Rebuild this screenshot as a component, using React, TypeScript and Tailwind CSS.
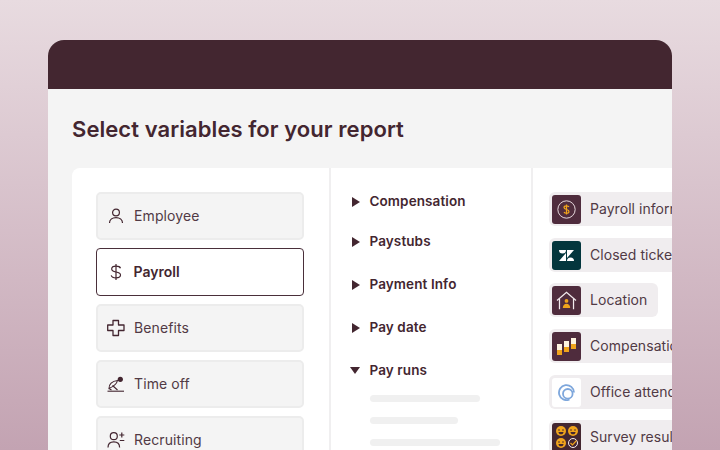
import React from "react";

const font = { fontFamily: "Inter, sans-serif" };

function PersonIcon() {
  return (
    <svg width="18" height="18" viewBox="0 0 18 18" fill="none" stroke="#432630" strokeWidth="1.2">
      <circle cx="9" cy="5.5" r="3.4" />
      <path d="M2.500 16c0-3.400 2.900-5.300 6.500-5.300s6.500 1.900 6.500 5.300" />
    </svg>
  );
}

function DollarIcon() {
  return (
    <svg width="18" height="18" viewBox="0 0 18 18" fill="none" stroke="#432630" strokeWidth="1.2">
      <path d="M9 1v16" />
      <path d="M13.500 5.200C13 3.800 11.500 3.200 9 3.200c-2.800 0-4.300 1.100-4.300 2.800 0 1.800 1.500 2.500 4.300 3 2.900.5 4.500 1.200 4.500 3 0 1.800-1.700 2.800-4.500 2.800-2.600 0-4.300-.8-4.800-2.500" />
    </svg>
  );
}

function PlusIcon() {
  return (
    <svg width="18" height="18" viewBox="0 0 18 18" fill="none" stroke="#432630" strokeWidth="1.300">
      <path d="M6 1.500h5.500v4.500h5.500v5.500h-5.500V16.500H6V11.500H.7V6H6z" strokeLinejoin="round" />
    </svg>
  );
}

function TimeOffIcon() {
  return (
    <svg width="18" height="18" viewBox="0 0 18 18" fill="none" stroke="#432630" strokeWidth="1.100">
      <circle cx="13.300" cy="4.300" r="2.600" fill="#432630" stroke="none" />
      <path d="M.5 16.200h16.500" />
      <path d="M2 13.500C1.800 9.500 5 6 10.500 5.500c-.6 2.800-3.500 5.800-8.500 8z" />
      <path d="M5.500 10.500l5 4.500" />
      <path d="M2 13.500l2.500 1.500" />
    </svg>
  );
}

function RecruitIcon() {
  return (
    <svg width="18" height="18" viewBox="0 0 18 18" fill="none" stroke="#432630" strokeWidth="1.200">
      <circle cx="6.800" cy="5.200" r="3.500" />
      <path d="M1 16.500c0-3.700 2.500-5.700 5.800-5.700s5.800 2 5.800 5.700" />
      <path d="M14.800 1.500v5M12.300 4h5M12.800 9.500h4.500" />
    </svg>
  );
}

function Tile({ bg, children }: { bg: string; children: React.ReactNode }) {
  return (
    <div className={`w-[29px] h-[29px] rounded-[3px] shrink-0 flex items-center justify-center ${bg}`}>
      {children}
    </div>
  );
}

function CoinLogo() {
  return (
    <svg width="19" height="19" viewBox="0 0 23 23" fill="none">
      <circle cx="11.500" cy="11.500" r="10.500" stroke="#e9dbe0" strokeWidth="1.200" />
      <path d="M14.500 8.500c-.5-1-1.500-1.500-3-1.500-1.800 0-3 .8-3 2.200s1.200 1.900 3 2.300c1.800.4 3 .9 3 2.300S13.300 16 11.500 16c-1.500 0-2.600-.5-3-1.500M11.500 5.500v12" stroke="#f0a41c" strokeWidth="1.500" />
    </svg>
  );
}

function ZendeskLogo() {
  return (
    <svg width="15" height="11" viewBox="0 0 15 11" fill="#ffffff">
      <path d="M0 0a3.500 3.500 0 0 0 7 0z" />
      <path d="M7 3v8H0z" />
      <path d="M8 0v8l7-8z" />
      <path d="M8 11a3.500 3.500 0 0 1 7 0z" />
    </svg>
  );
}

function HouseLogo() {
  return (
    <svg width="21" height="19" viewBox="0 0 25 23" fill="none">
      <path d="M1 11.500 12.500 1.500 24 11.500" stroke="#f3ebee" strokeWidth="1.500" />
      <path d="M4 9.500V22M21 9.500V22" stroke="#f3ebee" strokeWidth="1.500" />
      <circle cx="12.500" cy="12" r="2.300" fill="#f0a41c" />
      <path d="M8 20.500c0-3 1.800-5 4.500-5s4.500 2 4.500 5z" fill="#f0a41c" />
    </svg>
  );
}

function BarsLogo() {
  return (
    <svg width="19" height="17" viewBox="0 0 19 17">
      <rect x="0" y="6" width="5" height="11" fill="#f0a41c" />
      <rect x="0" y="6" width="5" height="6" fill="#fdf3e0" />
      <rect x="7" y="3" width="5" height="11" fill="#f0a41c" />
      <rect x="7" y="3" width="5" height="6" fill="#fdf3e0" />
      <rect x="14" y="0" width="5" height="11" fill="#f0a41c" />
      <rect x="14" y="0" width="5" height="6" fill="#fdf3e0" />
    </svg>
  );
}

function RingLogo() {
  return (
    <svg width="17" height="17" viewBox="0 0 17 17" fill="none" stroke="#7ea7dc" strokeWidth="1.800">
      <path d="M11.500 15.500A7.500 7.500 0 1 1 16 8.500" />
      <circle cx="9.800" cy="9.800" r="4.800" />
    </svg>
  );
}

function Face({ cx, cy }: { cx: number; cy: number }) {
  return (
    <g>
      <circle cx={cx} cy={cy} r="5" fill="#f0a41c" />
      <path d={`M${cx - 3} ${cy - 1}h2M${cx + 1} ${cy - 1}h2`} stroke="#432630" strokeWidth="0.900" />
      <path d={`M${cx - 2.5} ${cy + 1}h5c0 1.500-1 2.300-2.500 2.300s-2.500-.8-2.500-2.300z`} fill="#432630" />
    </g>
  );
}

function FacesLogo() {
  return (
    <svg width="24" height="24" viewBox="0 0 24 24">
      <Face cx={6} cy={6} />
      <Face cx={18} cy={6} />
      <Face cx={6} cy={18} />
      <circle cx="18" cy="18" r="4.500" fill="none" stroke="#f3ebee" strokeWidth="1" />
      <path d="M15.500 18l2 2 4-4.500" fill="none" stroke="#f0a41c" strokeWidth="1.200" />
    </svg>
  );
}

const sections = [
  { icon: <PersonIcon />, label: "Employee" },
  { icon: <DollarIcon />, label: "Payroll", active: true },
  { icon: <PlusIcon />, label: "Benefits" },
  { icon: <TimeOffIcon />, label: "Time off" },
  { icon: <RecruitIcon />, label: "Recruiting" },
];

const fields = [
  { label: "Compensation", mb: "mb-[23px]" },
  { label: "Paystubs", mb: "mb-[26px]" },
  { label: "Payment Info", mb: "mb-[26px]" },
  { label: "Pay date", mb: "mb-[26px]" },
];

const chips = [
  { label: "Payroll information", bg: "bg-[#4f2c3d]", logo: <CoinLogo />, mb: "mb-[12px]" },
  { label: "Closed tickets", bg: "bg-[#03363d]", logo: <ZendeskLogo />, mb: "mb-[11px]" },
  { label: "Location", bg: "bg-[#4f2c3d]", logo: <HouseLogo />, mb: "mb-[12px]", short: true },
  { label: "Compensation", bg: "bg-[#4f2c3d]", logo: <BarsLogo />, mb: "mb-[12px]" },
  { label: "Office attendance", bg: "bg-white", logo: <RingLogo />, mb: "mb-[11px]" },
  { label: "Survey results", bg: "bg-[#432630]", logo: <FacesLogo />, mb: "" },
];

export default function App() {
  return (
    <div
      className="w-[720px] h-[450px] overflow-hidden pt-10 px-12 bg-gradient-to-b from-[#e8dbe0] to-[#c3a3b2]"
      style={font}
    >
      <div className="h-[410px] rounded-t-[16px] overflow-hidden bg-[#f4f4f4]">
        <div className="h-[49px] bg-[#432630]" />
        <div className="pl-6 pt-[25px]">
          <h1 className="text-[22px] leading-[30px] font-semibold text-[#432630] tracking-[0.07px]">
            Select variables for your report
          </h1>
          <div className="mt-[24px] w-[700px] h-[300px] bg-white rounded-tl-[8px] flex text-[#432630]">
            <div className="w-[259px] shrink-0 border-r-2 border-[#f0eff0] pl-6 pr-[25px] pt-6 flex flex-col gap-2">
              {sections.map((s) => (
                <div
                  key={s.label}
                  className={
                    s.active
                      ? "h-[48px] shrink-0 flex items-center gap-[9px] pl-[9.5px] rounded-[4px] border-[1.5px] border-[#4a2f3a] bg-white text-[14px] font-semibold"
                      : "h-[48px] shrink-0 flex items-center gap-[9px] pl-[9px] rounded-[5px] border-2 border-[#ececec] bg-[#f4f4f4] text-[14px] text-[#513a45]"
                  }
                >
                  {s.icon}
                  <span className={s.active ? "pb-[2px]" : "pb-[2px] tracking-[0.1px]"}>{s.label}</span>
                </div>
              ))}
            </div>
            <div className="w-[202px] shrink-0 border-r-2 border-[#f0eff0] pl-[21px] pt-[25px]">
              {fields.map((f) => (
                <div key={f.label} className={`h-[17px] flex items-center gap-[9.5px] text-[13.5px] font-semibold tracking-[0.1px] ${f.mb}`}>
                  <span className="w-0 h-0 border-y-[5.5px] border-y-transparent border-l-[8px] border-l-[#432630]" />
                  <span>{f.label}</span>
                </div>
              ))}
              <div className="h-[17px] flex items-center gap-[9.5px] text-[13.5px] font-semibold tracking-[0.1px] -ml-[2px]">
                <span className="w-0 h-0 border-x-[5.5px] border-x-transparent border-t-[7px] border-t-[#432630]" />
                <span>Pay runs</span>
              </div>
              <div className="mt-[16px] ml-[17.5px] flex flex-col gap-[15px]">
                <div className="h-[7px] w-[110px] rounded-full bg-[#f0f0f0]" />
                <div className="h-[7px] w-[88px] rounded-full bg-[#f0f0f0]" />
                <div className="h-[7px] w-[130px] rounded-full bg-[#f0f0f0]" />
              </div>
            </div>
            <div className="pl-[16px] pt-[24px] w-[200px]">
              {chips.map((c) => (
                <div
                  key={c.label}
                  className={`h-[34px] flex items-center gap-[9px] pl-[3px] pr-[12px] rounded-[6px] bg-[#f0edef] text-[14px] text-[#513a45] whitespace-nowrap tracking-[0.05px] ${c.short ? "w-[109px]" : "w-[180px]"} ${c.mb}`}
                >
                  <Tile bg={c.bg}>{c.logo}</Tile>
                  <span className="pb-[2px]">{c.label}</span>
                </div>
              ))}
            </div>
          </div>
        </div>
      </div>
    </div>
  );
}
